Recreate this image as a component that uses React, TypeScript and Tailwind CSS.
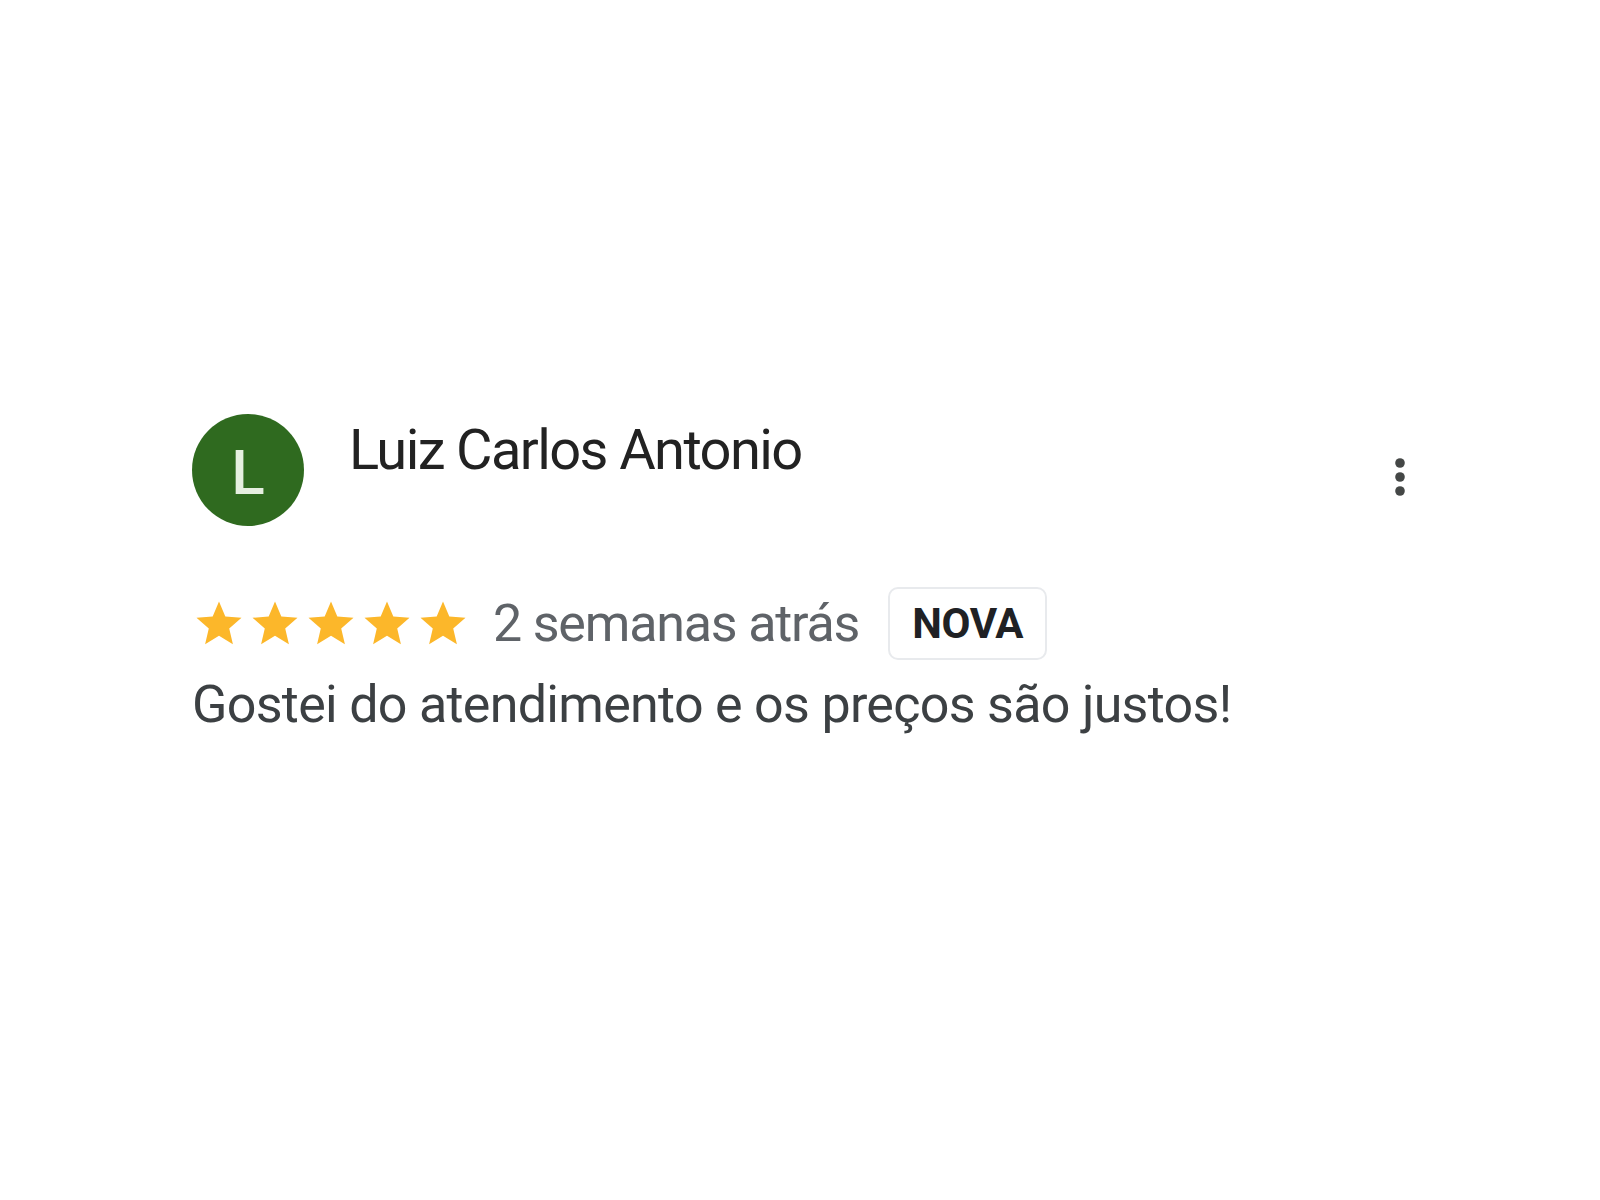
import React from 'react';

const Star = () => (
  <svg width="54" height="54" viewBox="0 0 24 24" className="shrink-0">
    <path
      fill="#fcb72a"
      d="M12 17.27L18.18 21l-1.64-7.03L22 9.24l-7.19-.61L12 2 9.19 8.63 2 9.24l5.46 4.73L5.82 21z"
    />
  </svg>
);

const MoreIcon = () => (
  <svg width="20" height="44" viewBox="0 0 20 44">
    <circle cx="10" cy="8" r="4.8" fill="#444746" />
    <circle cx="10" cy="22" r="4.8" fill="#444746" />
    <circle cx="10" cy="36" r="4.8" fill="#444746" />
  </svg>
);

export default function App() {
  return (
    <div
      className="w-[1600px] h-[1200px] bg-white pt-[414px] pl-[192px] pr-[190px]"
      style={{ fontFamily: 'Roboto, "Noto Sans", Arial, sans-serif' }}
    >
      {/* header: avatar, name, menu */}
      <div className="flex items-start">
        <div className="w-[112px] h-[112px] rounded-full bg-[#2f6a1f] flex items-center justify-center shrink-0">
          <span className="text-[62px] leading-none font-medium text-[#e6efe0] mt-[6px]">L</span>
        </div>
        <div className="ml-[45px] text-[56px] leading-[72px] tracking-[-1.6px] text-[#222222]">
          Luiz Carlos Antonio
        </div>
        <div className="ml-auto mt-[41px]">
          <MoreIcon />
        </div>
      </div>

      {/* rating row */}
      <div className="flex items-center mt-[61px]">
        <div className="flex gap-[2px]">
          <Star />
          <Star />
          <Star />
          <Star />
          <Star />
        </div>
        <span className="ml-[23px] text-[52px] leading-[60px] tracking-[-1.2px] text-[#5f6368]">2 semanas atrás</span>
        <span className="ml-[29px] h-[73px] px-[22px] flex items-center rounded-[10px] border-2 border-[#e8eaed] text-[42px] font-bold tracking-[-0.3px] text-[#202124]">
          NOVA
        </span>
      </div>

      {/* review body */}
      <p className="mt-[13px] text-[52px] leading-[64px] tracking-[-0.7px] text-[#3c4043]">
        Gostei do atendimento e os preços são justos!
      </p>
    </div>
  );
}
